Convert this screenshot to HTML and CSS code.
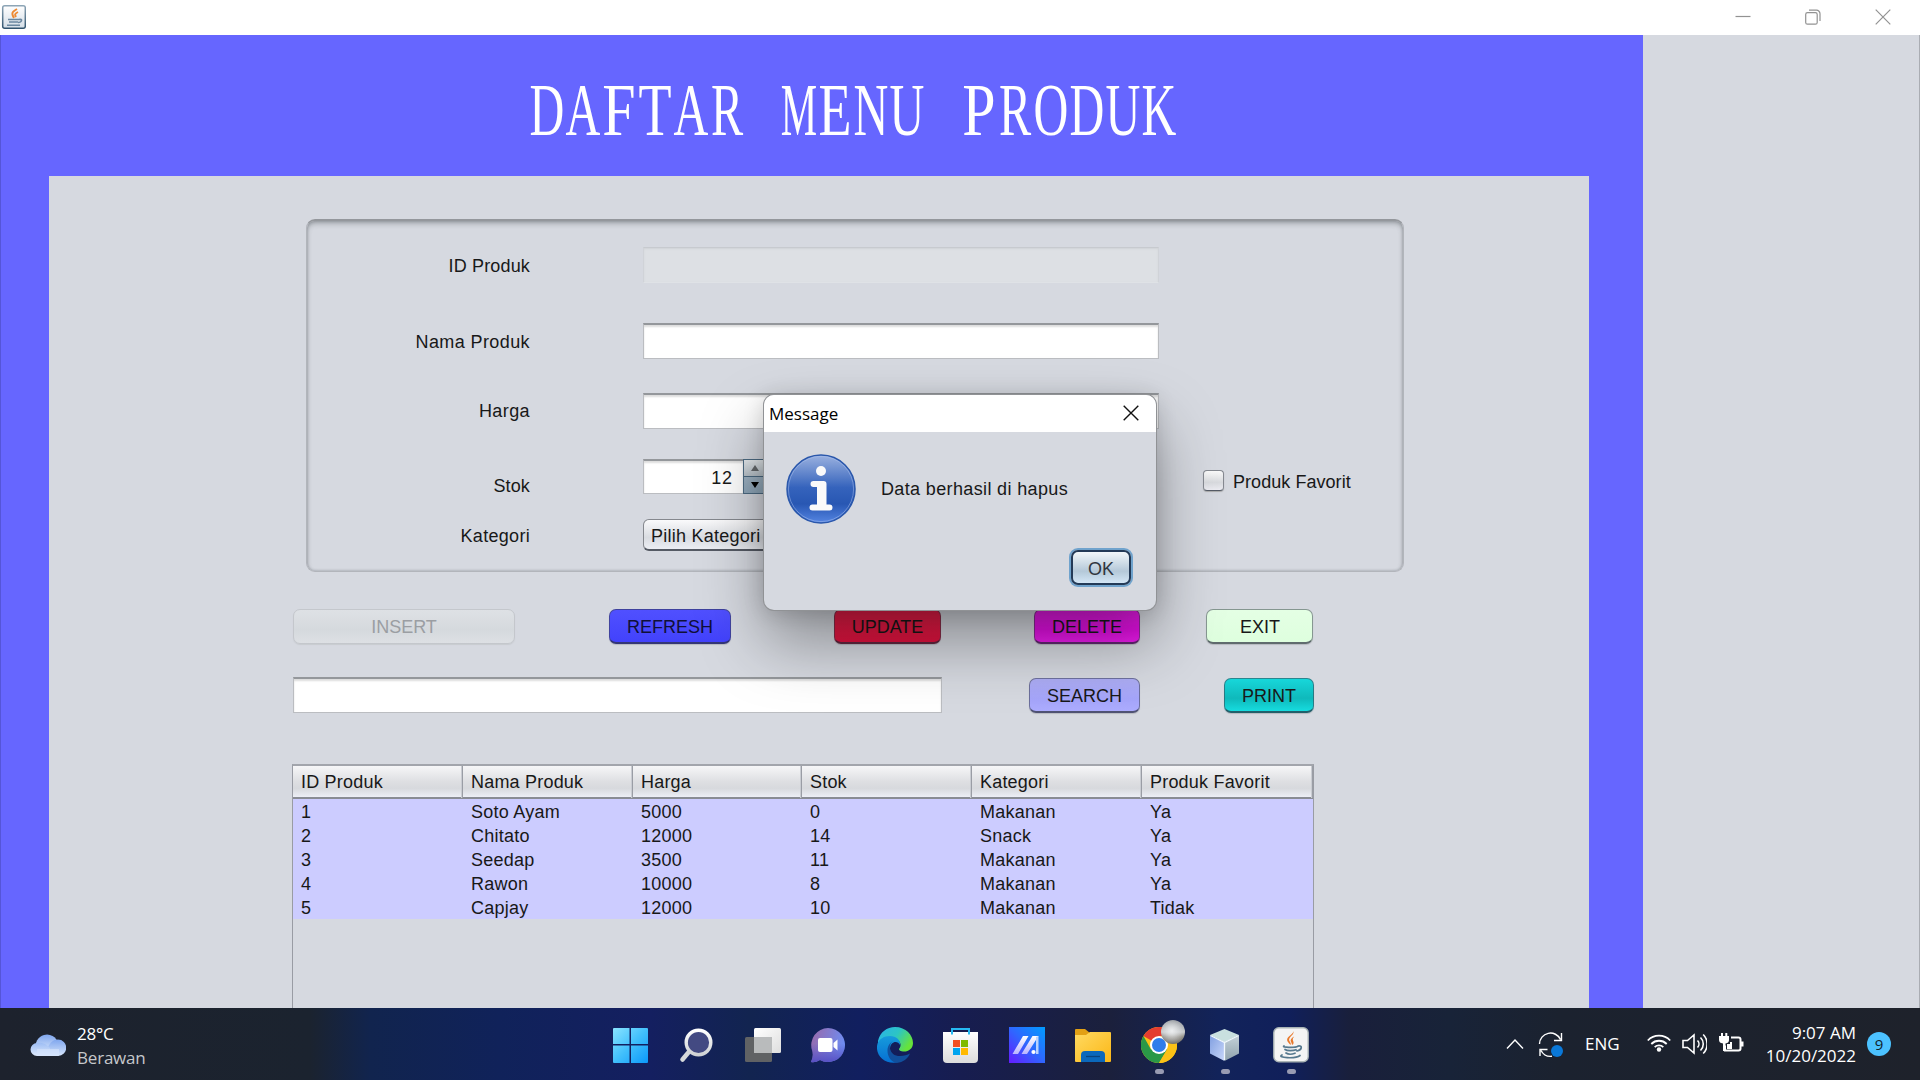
FILE: index.html
```html
<!DOCTYPE html>
<html lang="id">
<head>
<meta charset="utf-8">
<title>Daftar Menu Produk</title>
<link rel="stylesheet" href="styles.css">
</head>
<body>
<header class="titlebar">
  <svg class="app-icon" width="26" height="32" viewBox="0 0 26 32">
    <defs><linearGradient id="jb" x1="0" y1="0" x2="0" y2="1"><stop offset="0" stop-color="#8da5b6"/><stop offset="1" stop-color="#31536d"/></linearGradient>
    <linearGradient id="jf" x1="0" y1="0" x2="0" y2="1"><stop offset="0" stop-color="#fff"/><stop offset="1" stop-color="#d3dde6"/></linearGradient></defs>
    <rect x="2.700" y="5.700" width="22.600" height="22.600" rx="2" fill="url(#jf)" stroke="url(#jb)" stroke-width="1.500"/>
    <path d="M17 9c-5 3-6 4-3 9M18 12c-4 2-3 3-2 5" fill="none" stroke="#ee8a32" stroke-width="1.900"/>
    <path d="M8 19.500h11M9 22h9M7 25.300h13M19 19.500c4-1 3 3-1 3" fill="none" stroke="#6a87a0" stroke-width="1.600"/>
  </svg>
  <div class="window-controls">
    <svg width="16" height="16" viewBox="0 0 16 16"><path d="M.5 7.500h15"/></svg>
    <svg width="16" height="16" viewBox="0 0 16 16"><rect x=".7" y="3.700" width="11.500" height="11.500" rx="1.800"/><path d="M4 1.200h7.500a3.500 3.500 0 0 1 3.500 3.500V12"/></svg>
    <svg width="16" height="16" viewBox="0 0 16 16"><path d="M.7.7l14.600 14.600M15.300.7L.7 15.300"/></svg>
  </div>
</header>

<main class="window">
  <section class="frame">
    <h1 class="heading"><span>D</span><span>A</span><span class="narrow">F</span><span class="mid">T</span><span>A</span><span>R</span><span> </span><span class="wide">M</span><span class="mid">E</span><span>N</span><span>U</span><span> </span><span class="narrow">P</span><span>R</span><span>O</span><span>D</span><span>U</span><span>K</span></h1>
    <div class="panel">
      <form class="form-card">
        <label class="first">ID Produk</label><div class="field disabled"></div>
        <label class="first spaced">Nama Produk</label><div class="field"></div>
        <label class="spaced">Harga</label><div class="field"></div>
        <label class="low">Stok</label>
        <div class="spinner"><div class="field number">12</div><div class="arrows"><i class="up"></i><i class="down"></i></div></div>
        <div class="check"><span class="box"></span>Produk Favorit</div>
        <label class="last">Kategori</label><div class="combo">Pilih Kategori</div>
      </form>
      <div class="actions">
        <div class="btn insert">INSERT</div>
        <div class="btn refresh">REFRESH</div>
        <div class="btn update">UPDATE</div>
        <div class="btn delete">DELETE</div>
        <div class="btn exit">EXIT</div>
      </div>
      <div class="search-row">
        <div class="field query"></div>
        <div class="btn search">SEARCH</div>
        <div class="btn print">PRINT</div>
      </div>
      <div class="table">
        <div class="tr th"><span>ID Produk</span><span>Nama Produk</span><span>Harga</span><span>Stok</span><span>Kategori</span><span>Produk Favorit</span></div>
        <div class="tr"><span>1</span><span>Soto Ayam</span><span>5000</span><span>0</span><span>Makanan</span><span>Ya</span></div>
        <div class="tr"><span>2</span><span>Chitato</span><span>12000</span><span>14</span><span>Snack</span><span>Ya</span></div>
        <div class="tr"><span>3</span><span>Seedap</span><span>3500</span><span>11</span><span>Makanan</span><span>Ya</span></div>
        <div class="tr"><span>4</span><span>Rawon</span><span>10000</span><span>8</span><span>Makanan</span><span>Ya</span></div>
        <div class="tr"><span>5</span><span>Capjay</span><span>12000</span><span>10</span><span>Makanan</span><span>Tidak</span></div>
      </div>
    </div>
  </section>
</main>

<div class="dialog" role="dialog">
  <div class="dialog-title"><span>Message</span>
    <svg width="16" height="16" viewBox="0 0 16 16"><path d="M.7.7l14.600 14.600M15.300.7L.7 15.300" stroke="#111" stroke-width="1.400"/></svg>
  </div>
  <div class="dialog-body">
    <svg width="70" height="70" viewBox="0 0 70 70">
      <defs><linearGradient id="inf" x1="0" y1="0" x2="0" y2="1"><stop offset="0" stop-color="#9bb2e0"/><stop offset=".48" stop-color="#3563bc"/><stop offset=".72" stop-color="#2857b3"/><stop offset="1" stop-color="#5585e2"/></linearGradient></defs>
      <circle cx="35" cy="35" r="34" fill="url(#inf)" stroke="#2a57ab" stroke-width="1.500"/>
      <circle cx="35" cy="35" r="32.600" fill="none" stroke="#a9c0ee" stroke-opacity=".5"/>
      <circle cx="35" cy="17" r="5" fill="#fafafa"/>
      <path d="M27.500 30h10v23M26.500 53.500h17" fill="none" stroke="#fafafa" stroke-width="6" stroke-linecap="round" stroke-linejoin="round"/>
      <path d="M31 28h8.500v27H31z" fill="#fafafa"/>
    </svg>
    <p>Data berhasil di hapus</p>
  </div>
  <div class="ok">OK</div>
</div>

<footer class="taskbar">
  <div class="weather">
    <svg width="36" height="24" viewBox="0 0 36 24">
      <defs><linearGradient id="cl" x1="0" y1="0" x2="0" y2="1"><stop offset="0" stop-color="#7fa6ee"/><stop offset="1" stop-color="#d6e5fb"/></linearGradient><linearGradient id="cl2" x1="0" y1="0" x2="0" y2="1"><stop offset="0" stop-color="#9dbdf4"/><stop offset="1" stop-color="#dfeafc"/></linearGradient></defs>
      <path d="M6 16a11 11 0 0 1 22-6l-4 8z" fill="url(#cl)"/>
      <path d="M28 6.500a8 8 0 0 1 0 16.500H18V14c2-4 5-7.500 10-7.500z" fill="url(#cl)"/>
      <path d="M7 10c6-1 10 2 13 5v8H7a6.500 6.500 0 0 1 0-13z" fill="url(#cl2)"/><path d="M7 16h22v7H7z" fill="#d4e3fb" opacity=".7"/>
    </svg>
    <div class="weather-text"><span>28°C</span><span class="dim">Berawan</span></div>
  </div>

  <nav class="apps">
    <svg viewBox="0 0 36 36"><defs><linearGradient id="w" x1="0" y1="0" x2="1" y2="1"><stop offset="0" stop-color="#8ae4ff"/><stop offset=".5" stop-color="#42c0fc"/><stop offset="1" stop-color="#0b98fb"/></linearGradient></defs><path d="M0 2q0-1 1-1h15.500v16H0zM18 1h16q1 0 1 1v15H18zM0 18.500h16.500V36H1q-1 0-1-1zM18 18.500h17V35q0 1-1 1H18z" fill="url(#w)"/></svg>
    <svg viewBox="0 0 36 36"><defs><linearGradient id="s" x1="0" y1="0" x2="0" y2="1"><stop offset="0" stop-color="#fff"/><stop offset="1" stop-color="#cfd2d4"/></linearGradient></defs><path d="M11.500 23L3.500 32.500" stroke="#d6d9da" stroke-width="4.500" stroke-linecap="round"/><circle cx="19.500" cy="15.500" r="12.300" fill="#434a82" stroke="url(#s)" stroke-width="3.400"/></svg>
    <svg viewBox="0 0 36 36"><defs><linearGradient id="tv" x1="0" y1="0" x2="1" y2="1"><stop offset="0" stop-color="#fff"/><stop offset="1" stop-color="#dedede"/></linearGradient></defs><rect y="10" width="27" height="25" rx="1.500" fill="#606264"/><rect x="9" y="1" width="27" height="25" rx="1.500" fill="url(#tv)"/><path d="M9 10h18v16H10.500Q9 26 9 24.500z" fill="#b9bbbc"/></svg>
    <svg viewBox="0 0 36 36"><defs><linearGradient id="ch" x1="0" y1="0" x2="1" y2=".3"><stop offset="0" stop-color="#9a68a8"/><stop offset="1" stop-color="#6f8cf0"/></linearGradient><linearGradient id="ch2" x1="0" y1="0" x2="0" y2="1"><stop offset=".45" stop-color="#5a52c4" stop-opacity="0"/><stop offset="1" stop-color="#5750c4"/></linearGradient></defs><path d="M17 1a17 17 0 1 1-8 32q-5 3-9 2 3-6 1-12A17 17 0 0 1 17 1z" fill="url(#ch)"/><path d="M17 1a17 17 0 1 1-8 32q-5 3-9 2 3-6 1-12A17 17 0 0 1 17 1z" fill="url(#ch2)"/><rect x="7" y="11" width="14.500" height="14" rx="2" fill="#fff"/><path d="M22.500 16l4-3.500v11l-4-3.500z" fill="#fff"/></svg>
    <svg viewBox="0 0 36 36"><defs><linearGradient id="e1" x1="0" y1="0" x2="1" y2=".5"><stop offset="0" stop-color="#2ab2ea"/><stop offset=".55" stop-color="#2cc5c4"/><stop offset="1" stop-color="#66e33b"/></linearGradient><linearGradient id="e2" x1="0" y1="0" x2="0" y2="1"><stop offset="0" stop-color="#169bdc"/><stop offset="1" stop-color="#0670d2"/></linearGradient></defs><path d="M1 14C3 5 10 0 18 0c11 0 18 8 18 16 0 6-5 9-10 8.500-4-.5-5-2-3-4 2-4-1-8-6-8.500C9 11 4 15 1 22z" fill="url(#e1)"/><path d="M0 19c1-7 7-10 13-10 7 0 11 5 10 9-2-5-10-4-10 4 0 6 4 11 9 13C9 38-1 30 0 19z" fill="url(#e2)"/><path d="M16 14c-6 4-3 14 5 15 5 .5 9-1 12-2.500C31 32 24 37 18 35.500 10 33 7 19 16 14z" fill="#114f9c"/></svg>
    <svg viewBox="0 0 36 36"><defs><linearGradient id="st" x1="0" y1="0" x2="0" y2="1"><stop offset="0" stop-color="#fff"/><stop offset="1" stop-color="#dcdcdc"/></linearGradient></defs><path d="M0 5h35v27q0 4-4 4H4q-4 0-4-4z" fill="url(#st)"/><path d="M9 7.500V2h17v5.500" fill="none" stroke="#26b9f2" stroke-width="2"/><path d="M10 13h7v7h-7z" fill="#f25022"/><path d="M18 13h7v7h-7z" fill="#7fba00"/><path d="M10 21h7v7h-7z" fill="#00a4ef"/><path d="M18 21h7v7h-7z" fill="#ffb900"/></svg>
    <svg viewBox="0 0 36 36"><defs><linearGradient id="ma" x1="0" y1="1" x2="1" y2="0"><stop offset="0" stop-color="#651bff"/><stop offset=".5" stop-color="#2f66ff"/><stop offset="1" stop-color="#009cff"/></linearGradient><linearGradient id="mb" x1="0" y1="1" x2="0" y2="0"><stop offset="0" stop-color="#b9b4ff"/><stop offset="1" stop-color="#fff"/></linearGradient></defs><path d="M0 0h36v36H0z" fill="url(#ma)"/><path d="M3.500 27L14 9h5.500L9 27zM12.500 27L23.500 9h6L18 27z" fill="url(#mb)"/><path d="M27 10l2.500-1v18H27z" fill="#b9d2ff"/><circle cx="24.500" cy="25" r="2.100" fill="#fff"/></svg>
    <svg viewBox="0 0 36 36"><defs><linearGradient id="fo" x1="0" y1="0" x2="1" y2="1"><stop offset="0" stop-color="#ffda62"/><stop offset="1" stop-color="#fbb716"/></linearGradient></defs><path d="M0 3q0-1 1-1h9l5 4v5H0z" fill="#e2a014"/><path d="M0 8h11l4-3h20q1 0 1 1v28q0 1-1 1H1q-1 0-1-1z" fill="url(#fo)"/><path d="M6 35v-7q0-4 4-4h16q4 0 4 4v7z" fill="#0b68bb"/><path d="M11 29.500h14" stroke="#0a437c" stroke-width="1.300"/></svg>
    <div class="app running">
      <svg viewBox="0 0 36 36"><circle cx="18" cy="18" r="18" fill="#fbc116"/><path d="M18 18L2.400 9A18 18 0 0 1 33.600 9H18z" fill="#e43d30"/><path d="M2.400 9A18 18 0 0 0 18 36l8-13.500-8-4.500-8 4.500z" fill="#2a9847"/><path d="M18 36l8.500-14L34 9.500A18 18 0 0 1 18 36z" fill="#fbc116"/><circle cx="18" cy="18" r="9" fill="#fff"/><circle cx="18" cy="18" r="7" fill="#2f7deb"/></svg>
      <span class="avatar"></span>
    </div>
    <div class="app running"><svg viewBox="0 0 36 36"><defs><linearGradient id="cu" x1="0" y1="0" x2="1" y2="1"><stop offset="0" stop-color="#819fe0"/><stop offset="1" stop-color="#c8d7fa"/></linearGradient><linearGradient id="cu2" x1="0" y1="0" x2="0" y2="1"><stop offset="0" stop-color="#c5d2da"/><stop offset="1" stop-color="#8fa2ac"/></linearGradient></defs><path d="M17.500 2L32 8l-14.500 7.500L3 8z" fill="#c9e0df"/><path d="M3 8l14.500 7.500V34L3 26.500z" fill="url(#cu)"/><path d="M32 8l-14.500 7.500V34L32 26.500z" fill="url(#cu2)"/><path d="M3.500 8.500l14 7 14-7M17.500 16v17" fill="none" stroke="#f0f8fc" stroke-width="1.300"/></svg></div>
    <div class="app running"><svg viewBox="0 0 36 36"><rect x=".8" y=".8" width="34.400" height="34" rx="5" fill="#f4f4f4" stroke="#a9b3b5" stroke-width="1.400"/><path d="M20.500 4c1 5-7 6-3.500 11 1 1.500 1 2 .5 3-4-4-4.500-6-1-9 2-2 4-3 4-5zM22.500 9c-4 2-2.500 4-2 6 .4 1.500-.5 2.500-1.500 3 0-3-3-4 0-7 1-1 2.500-1.500 3.500-2z" fill="#e8792c"/><path d="M11 19c-3 1.500 11 2 14 .3M12 22.500c2 1.400 8 1.400 11 .2M13 26c2 1.400 6 1.400 9 .2M25 19c5-1 4 4-1 5M9 28c-6 3 14 4 18 .5" fill="none" stroke="#55788e" stroke-width="1.700" stroke-linecap="round"/></svg></div>
  </nav>

  <div class="tray">
    <svg width="18" height="12" viewBox="0 0 18 12"><path d="M1 10.500L9 2l8 8.500"/></svg>
    <svg class="sync" width="26" height="26" viewBox="0 0 26 26"><path d="M1.500 12A11 11 0 0 1 22.500 7.500M23.500 1v7.500H16M14 24.300A11 11 0 0 1 3 18.500M2 24v-6.500h7.500"/><circle cx="19" cy="19" r="6" fill="#0a78d8" stroke="none"/></svg>
    <span class="lang">ENG</span>
    <svg class="wifi" width="24" height="18" viewBox="0 0 24 18"><path d="M.8 6.500a15.500 15.500 0 0 1 22.400 0M4.300 10a10.800 10.800 0 0 1 15.400 0M7.700 13.200a6.200 6.200 0 0 1 8.600 0" stroke-width="1.800"/><circle cx="12" cy="15.500" r="2.200" fill="#fff" stroke="none"/></svg>
    <svg class="vol" width="25" height="22" viewBox="0 0 25 22"><path d="M1 7.500h4.500L12 2v18l-6.500-5.500H1zM15.500 7.500a5 5 0 0 1 0 7M18.500 4.500a9 9 0 0 1 0 13M21.200 1.500a13.500 13.500 0 0 1 0 19" stroke-width="1.600"/></svg>
    <svg class="bat" width="26" height="20" viewBox="0 0 26 20"><path d="M12 4.500h7.500q2 0 2 2v9q0 2-2 2H6v-5M23.500 8.500v5" stroke-width="2"/><path d="M0 3h10v4q0 3-3.500 3.500V18H4v-7.500Q0 10 0 7zM2 0h2v3H2zM6.300 0h2v3h-2zM8 11h3V9h2v7H8z" fill="#fff" stroke="none"/></svg>
    <div class="clock"><span>9:07 AM</span><span>10/20/2022</span></div>
    <span class="badge">9</span>
  </div>
</footer>
</body>
</html>
```
FILE: styles.css
```css
* { box-sizing: border-box; }
body {
  margin: 0; width: 1920px; height: 1080px; overflow: hidden; position: relative;
  display: flex; flex-direction: column;
  font: 18px "Liberation Sans", Arial, sans-serif; color: #181818; background: #d6d9e0;
}
svg { display: block; flex: none; }

.titlebar { height: 35px; flex: none; background: #fff; display: flex; justify-content: space-between; }
.window-controls { display: flex; gap: 54px; padding: 9px 29px 0 0; }
.window-controls svg { fill: none; stroke: #929292; stroke-width: 1.2; }

.window { height: 973px; flex: none; overflow: hidden; border-right: 1px solid #aaadb3; }
.frame {
  width: 1643px; height: 973px; background: #66f; padding: 0 54px 0 48px;
  border-left: 1px solid #5555d8; display: flex; flex-direction: column;
}
.heading {
  height: 72px; flex: none; margin: 40px 0 29px 480px; display: flex;
  font: 73px/72px "Liberation Serif", "Times New Roman", serif; color: #fff;
}
/* every glyph is fitted to a half-width cell of 36px */
.heading span { width: 36px; flex: none; display: flex; justify-content: center; white-space: pre; transform: scaleX(.66); }
.heading .narrow { transform: scaleX(.82); }
.heading .mid { transform: scaleX(.74); }
.heading .wide { transform: scaleX(.56); }
.panel { height: 832px; flex: none; background: #d6d9e0; padding: 43px 0 0 243px; display: flex; flex-direction: column; }

.form-card {
  margin: 0 0 37px 14px; width: 1098px; height: 353px; flex: none; padding-top: 26px;
  border: 1px solid #b2b5bb; border-top: 2px solid #94979c; border-radius: 9px;
  box-shadow: inset 0 3px 5px rgba(60,65,70,.3), inset 0 0 3px rgba(80,85,90,.45);
  display: grid; grid-template-columns: 223px 516px auto; column-gap: 113px;
  grid-template-rows: 76px 70px 66px 60px 33px; align-items: start;
}
.form-card label { grid-column: 1; text-align: right; line-height: 37px; letter-spacing: .15px; }
.form-card label.first { line-height: 38px; }
.form-card label.spaced { letter-spacing: .4px; }
.form-card label.low { padding-top: 9px; }
.form-card label.last { line-height: 34px; letter-spacing: .3px; }
.field {
  height: 36px; background: #fff; border: 1px solid #bbbdc1; border-top: 2px solid #94979b;
  box-shadow: inset 0 2px 2px #ddd;
}
.form-card .field { grid-column: 2; }
.field.disabled { background: #dde0e4; border-color: #d0d3d8; border-top: 1px solid #c7cacf; border-bottom-color: #dfe2e6; box-shadow: inset 0 1px 2px #d0d3d7; }
.spinner { grid-column: 2; grid-row: 4; display: flex; width: 136px; height: 35px; }
.field.number { width: 100px; height: 35px; border-right: 0; text-align: right; padding-right: 10px; line-height: 34px; letter-spacing: .9px; }
.arrows { width: 30px; border: 1px solid #4d6b83; display: flex; flex-direction: column; }
.arrows i { flex: 1; display: flex; align-items: center; padding-left: 7px; background: linear-gradient(#e6ebee, #b9c3ca); }
.arrows .down { border-top: 1px solid #4d6b83; background: linear-gradient(#9fb3c3, #8fa7ba); }
.arrows i::after { content: ""; border: 4px solid transparent; border-top: 0; border-bottom: 6px solid #666a6d; }
.arrows .down::after { border: 4px solid transparent; border-bottom: 0; border-top: 6px solid #000; }
.check { grid-column: 3; grid-row: 4; margin: 11px 0 0 -69px; display: flex; gap: 9px; line-height: 24px; align-items: flex-start; letter-spacing: .05px; }
.box { width: 21px; height: 21px; border: 1px solid #858991; border-bottom-color: #555b66; border-radius: 4px; background: linear-gradient(#fafafa, #d8dade 60%, #ececf2); box-shadow: 0 1px 1px #aaa; }
.combo {
  grid-column: 2; width: 230px; height: 32px; padding-left: 7px; line-height: 32px; letter-spacing: .25px; white-space: nowrap;
  border: 1px solid #85888e; border-bottom: 2px solid #555a64; border-radius: 6px;
  background: linear-gradient(#fafafb, #d9dce1 60%, #eceef4);
}

.actions, .search-row { display: flex; flex: none; }
.actions { height: 35px; margin: 0 0 33px 1px; }
.search-row { height: 36px; margin: 0 0 51px 1px; }
.btn {
  height: 35px; line-height: 35px; text-align: center; border-radius: 7px;
  border: 1px solid rgba(60,65,80,.55); border-bottom: 2px solid rgba(40,45,60,.7);
  background-origin: border-box; box-shadow: 0 1px 1px rgba(0,0,0,.15);
}
.insert { width: 222px; margin-right: 94px; color: #9b9ea3; background: linear-gradient(#dee1e5, #d5d9dd 60%, #dde0e4); border: 1px solid #c4c7cc; box-shadow: 0 1px 1px #c8cbd0; }
.refresh { width: 122px; margin-right: 103px; background: linear-gradient(#5050ff, #4242fc); color: #101038; }
.update { width: 107px; margin-right: 93px; background: linear-gradient(#e8204a, #e3123f); }
.delete { width: 106px; margin-right: 66px; background: linear-gradient(#ea1cea, #e410e4 60%, #ee1cee); }
.exit { width: 107px; padding-left: 1px; background: linear-gradient(#e4ffe4, #deffde); }
.query { width: 649px; margin-right: 87px; }
.search { width: 111px; margin: 1px 84px 0 0; background: linear-gradient(#adadf4, #a5a5fa 60%, #acacff); }
.print { width: 90px; margin-top: 1px; background: linear-gradient(#17d7da, #0fb9bb 60%, #16dcdf); }

.table { width: 1022px; height: 300px; flex: none; border: 1px solid #999ca4; border-top: 2px solid #a2a5ac; }
.tr { display: grid; grid-template-columns: 170px 170px 169px 170px 170px 1fr; height: 24px; line-height: 27px; background: #ccf; }
.tr span { padding-left: 8px; letter-spacing: .25px; }
.tr.th { height: 33px; line-height: 32px; background: linear-gradient(#f6f6f8, #dedfe2 50%, #d7d9dd 72%, #edeff6); border-bottom: 2px solid #898c94; }
.tr.th span { border-right: 1px solid #9a9da5; box-shadow: inset -1px 0 #c9ccd2; letter-spacing: .2px; }

.dialog {
  position: absolute; left: 764px; top: 395px; width: 392px; height: 215px;
  background: #d6d9e0; border-radius: 10px; overflow: hidden;
  box-shadow: 0 0 0 1px #909295, 0 32px 64px rgba(0,0,0,.36), 0 2px 21px rgba(0,0,0,.16);
}
.dialog-title { height: 37px; background: #fff; display: flex; justify-content: space-between; padding: 9px 17px 0 5px; }
.dialog-title svg { margin-top: 1px; }
.dialog-title span { font: 17px/20px "Open Sans", sans-serif; color: #000; }
.dialog-body { display: flex; align-items: center; gap: 25px; padding: 22px 0 0 22px; }
.dialog-body p { margin: 0; letter-spacing: .36px; }
.ok {
  width: 60px; height: 35px; margin: 26px 0 0 307px; border: 2px solid #233a57; border-radius: 7px;
  background: linear-gradient(#f2f7fa, #b4c8d8 62%, #d3e6f6); text-align: center; line-height: 34px; color: #303740;
  box-shadow: 0 0 0 2px #70a3cd;
}

.taskbar {
  height: 72px; flex: none; color: #fff; font: 17px/24px "Open Sans", sans-serif;
  display: grid; grid-template-columns: 613px 1fr 420px;
  background: linear-gradient(90deg, #1d222d 0, #1b232f 310px, #11244e 370px, #10225a 500px, #141f60 650px, #122450 750px, #111f5f 860px, #171d50 960px, #1b203c 1110px, #12235a 1220px, #101f5a 1290px, #191f3b 1350px, #182338 1450px, #1b222f 1560px, #1e222b 1920px);
}
.weather { display: flex; padding: 14px 0 0 30px; gap: 11px; }
.weather svg { margin-top: 11px; }
.weather-text, .clock { display: flex; flex-direction: column; }
.weather-text { letter-spacing: -.2px; }
.weather-text .dim { color: #c6c8cb; }
.apps { display: flex; gap: 30px; padding-top: 19px; }
.apps svg { width: 36px; height: 36px; }
.app { position: relative; height: 36px; }
.running::after { content: ""; position: absolute; left: 14px; top: 42px; width: 9px; height: 5px; border-radius: 3px; background: #989bb2; }
.avatar { position: absolute; left: 20px; top: -7px; width: 24px; height: 24px; border-radius: 50%; background: radial-gradient(circle at 45% 45%, #eceeef 0, rgba(220,222,223,.3) 55%, transparent 75%), linear-gradient(#858a90, #c5c8ca 50%, #8a877f 70%, #69665f); }
.tray { display: flex; padding-left: 6px; }
.tray svg { fill: none; stroke: #fff; stroke-width: 1.4; margin-top: 30px; }
.tray .sync { margin: 24px 0 0 14px; }
.lang { margin: 24px 0 0 21px; width: 36px; }
.tray .wifi { margin: 26px 0 0 26px; }
.tray .vol { margin: 25px 0 0 11px; }
.tray .bat { margin: 25px 0 0 12px; }
.clock { width: 111px; margin-top: 13px; text-align: right; line-height: 23px; }
.badge { width: 24px; height: 24px; margin: 24px 0 0 11px; border-radius: 50%; background: #4cc2ff; color: #10222e; text-align: center; font-size: 15px; line-height: 24px; }
```
